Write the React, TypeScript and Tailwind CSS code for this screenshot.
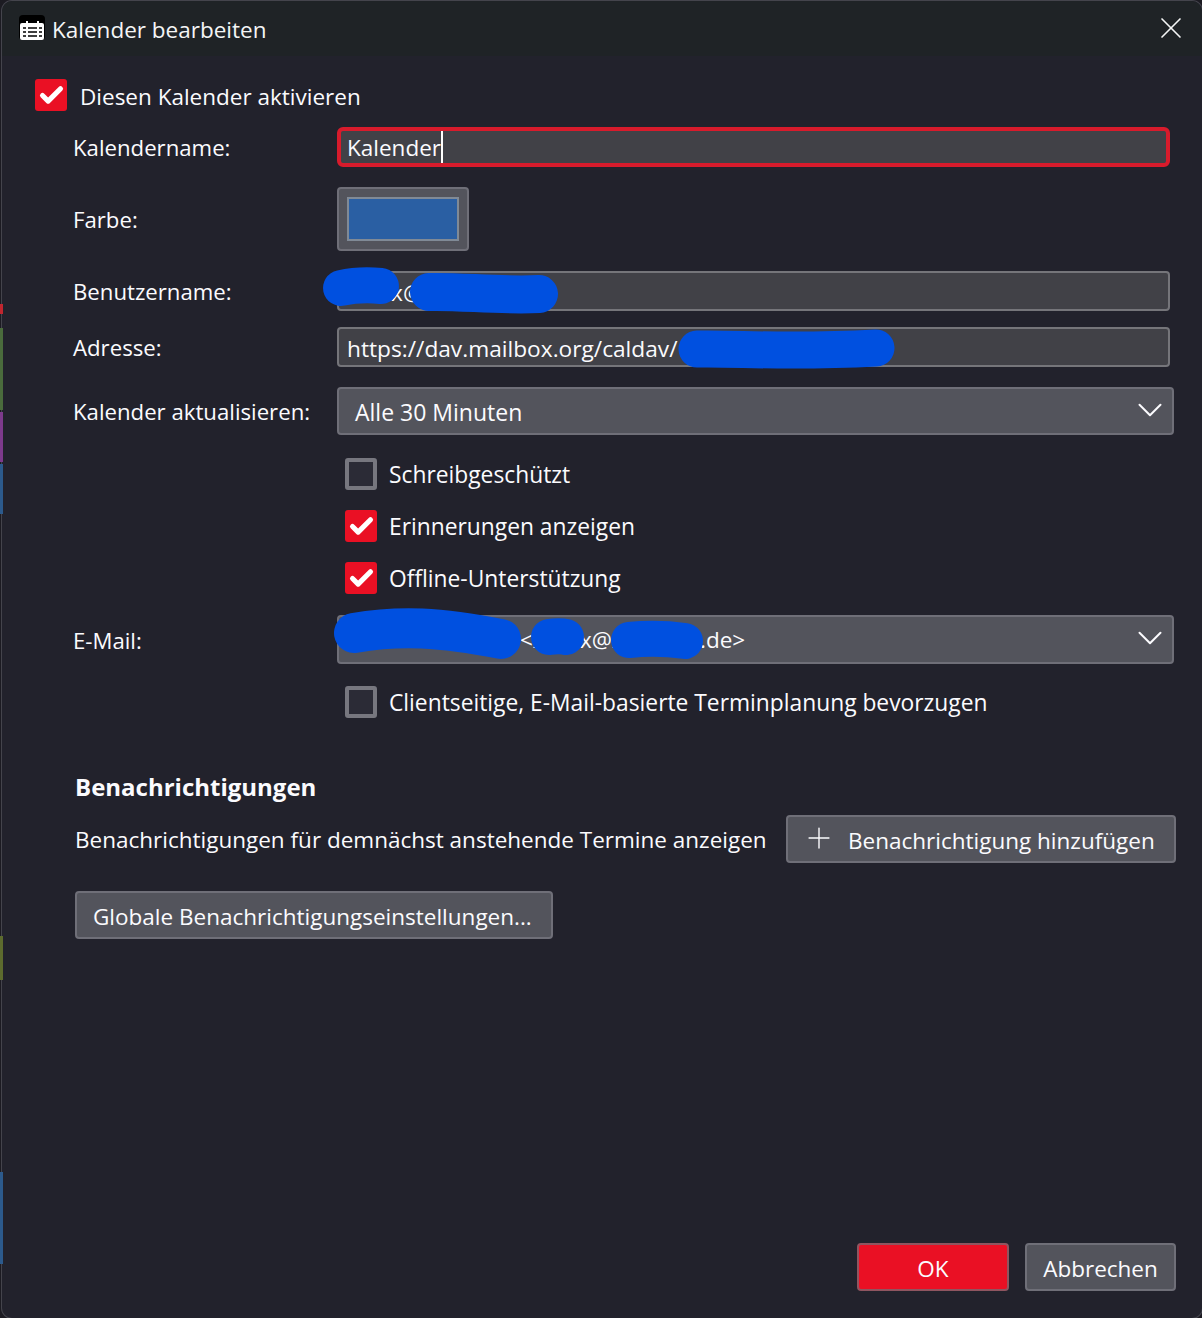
import { X, ChevronDown, Plus, Check } from "lucide-react";
import type { ReactNode } from "react";

function Checkbox({ checked, label, big }: { checked?: boolean; label: string; big?: boolean }) {
  return (
    <div className="flex h-8 items-center">
      <div
        className={
          checked
            ? "flex h-8 w-8 items-center justify-center rounded-[3px] bg-[#ea1024]"
            : "h-8 w-8 rounded-[3px] border-4 border-[#77777f] bg-[#2b2b36]"
        }
      >
        {checked && <Check size={27} strokeWidth={4.5} className="text-white" />}
      </div>
      <span className={big ? "ml-[13px] pt-1 text-[#fbfbfe]" : "ml-3 pt-[2px] text-[22.8px] text-[#fbfbfe]"}>{label}</span>
    </div>
  );
}

function Row({ label, children, className }: { label: string; children: ReactNode; className?: string }) {
  return (
    <div className={`flex items-center ${className ?? ""}`}>
      <span className="w-[335px] shrink-0 pt-[2px] pl-[71px] text-[22.2px] text-[#fbfbfe]">{label}</span>
      {children}
    </div>
  );
}

const textInput = "flex h-10 w-[833px] items-center rounded-[4px] border-2 border-[#75757a] bg-[#414147] px-2 pt-1 text-[22.7px] text-[#fbfbfe]";
const selectBox = "flex w-[837px] items-center justify-between rounded-[4px] border-2 border-[#6f6f78] bg-[#53545c] text-[23px] text-[#fbfbfe]";
const button = "flex h-12 items-center rounded-[4px] border-2 border-[#6f6f78] bg-[#53545c] pt-[3px] text-[#fbfbfe]";

// painted-over parts of the screenshot
function Scribble({ d, width }: { d: string; width: number }) {
  return (
    <svg className="pointer-events-none absolute top-0 left-0" width="1202" height="1318" fill="none">
      <path d={d} stroke="#0050e0" strokeWidth={width} strokeLinecap="round" strokeLinejoin="round" />
    </svg>
  );
}

export default function App() {
  return (
    <div
      className="relative h-[1318px] w-[1202px] overflow-hidden bg-[#1c1b22] pt-px pl-[2px] text-[22.5px] leading-8 whitespace-nowrap"
      style={{ fontFamily: '"Open Sans", "Noto Sans", sans-serif' }}
    >
      <div className="absolute top-[304px] left-0 h-[10px] w-[3px] bg-[#c0262f]" />
      <div className="absolute top-[328px] left-0 h-[82px] w-[3px] bg-[#4a6b3c]" />
      <div className="absolute top-[412px] left-0 h-[50px] w-[3px] bg-[#7d3a8c]" />
      <div className="absolute top-[464px] left-0 h-[50px] w-[3px] bg-[#2c5a8c]" />
      <div className="absolute top-[936px] left-0 h-[44px] w-[3px] bg-[#5d6b2e]" />
      <div className="absolute top-[1172px] left-0 h-[92px] w-[3px] bg-[#2c5a8c]" />

      <div className="h-full w-[1200px] overflow-hidden rounded-[10px] bg-[#22222c] shadow-[0_0_0_1px_#44444c]">
        <div className="flex h-[55px] items-center justify-between bg-[#1f2326] pr-[13px] pl-[17px]">
          <div className="flex items-center">
            <svg width="26" height="26" viewBox="0 0 26 26" className="-mt-[2px]">
              <rect width="26" height="25" rx="4" fill="#000" />
              <rect x="1" y="8" width="24" height="17" rx="2" fill="#fff" />
              <rect x="7" y="6" width="2" height="3" fill="#fff" />
              <rect x="18" y="6" width="2" height="3" fill="#fff" />
              <path d="M4 13h3M9 13h9M20 13h3M4 17h3M9 17h9M20 17h3M4 21h3M9 21h9M20 21h3" stroke="#000" strokeWidth="1.4" />
            </svg>
            <span className="ml-[7px] pt-[2px] text-[#f4f5f5]">Kalender bearbeiten</span>
          </div>
          <X size={36} strokeWidth={1.1} className="-mt-px text-[#f4f5f5]" />
        </div>

        <div className="mt-[23px] ml-[33px]">
          <Checkbox checked big label="Diesen Kalender aktivieren" />
        </div>

        <Row label="Kalendername:" className="mt-4">
          <div className="flex h-10 w-[833px] items-center rounded-[6px] border-4 border-[#d81b2c] bg-[#414147] px-[6px] text-[#fbfbfe]">
            <span className="pt-[2px]">Kalender</span>
            <span className="h-8 w-[2px] bg-white" />
          </div>
        </Row>

        <Row label="Farbe:" className="mt-5">
          <div className="h-16 w-[132px] rounded-[4px] border-2 border-[#6f6f78] bg-[#53545c] p-2">
            <div className="h-full w-full border-2 border-[#808a96] bg-[#2a5fa3]" />
          </div>
        </Row>

        <Row label="Benutzername:" className="mt-5">
          <div className={textInput}>
            <span className="pl-[44px]">x@</span>
          </div>
        </Row>

        <Row label="Adresse:" className="mt-4">
          <div className={textInput}>https://dav.mailbox.org/caldav/</div>
        </Row>

        <Row label="Kalender aktualisieren:" className="mt-5">
          <div className={`${selectBox} h-12 pr-px pl-4`}>
            <span className="pt-[2px]">Alle 30 Minuten</span>
            <ChevronDown size={42} strokeWidth={1.15} className="-mt-[2px]" />
          </div>
        </Row>

        <div className="mt-[23px] flex flex-col gap-5 pl-[343px]">
          <Checkbox label="Schreibgeschützt" />
          <Checkbox checked label="Erinnerungen anzeigen" />
          <Checkbox checked label="Offline-Unterstützung" />
        </div>

        <Row label="E-Mail:" className="mt-[21px]">
          <div className={`${selectBox} h-[49px] pr-px pl-[181px]`}>
            <span className="text-[22.5px]">&lt;xxxxx@xxxxxxxi.de&gt;</span>
            <ChevronDown size={42} strokeWidth={1.15} className="-mt-[3px]" />
          </div>
        </Row>

        <div className="mt-[22px] pl-[343px]">
          <Checkbox label="Clientseitige, E-Mail-basierte Terminplanung bevorzugen" />
        </div>

        <div className="ml-[73px]">
          <h2 className="mt-[53px] text-[24px] font-bold text-[#fbfbfe]">Benachrichtigungen</h2>
          <div className="mt-[12px] flex items-center">
            <span className="w-[711px] shrink-0 pt-[2px] text-[#fbfbfe]">Benachrichtigungen für demnächst anstehende Termine anzeigen</span>
            <div className={`${button} w-[390px] pl-[14px]`}>
              <Plus size={34} strokeWidth={1} className="-mt-[5px]" />
              <span className="ml-3">Benachrichtigung hinzufügen</span>
            </div>
          </div>
          <div className={`${button} mt-7 w-[478px] pl-4`}>Globale Benachrichtigungseinstellungen...</div>
        </div>

        <div className="mt-[304px] flex justify-end gap-4 pr-[26px]">
          <div className="flex h-12 w-[152px] items-center justify-center rounded-[4px] border-2 border-[#8f5560] bg-[#ea1024] pt-[3px] text-[#fbfbfe]">OK</div>
          <div className={`${button} w-[151px] justify-center`}>Abbrechen</div>
        </div>
      </div>

      <Scribble width={36} d="M341 288C355 285 370 285 381 286" />
      <Scribble width={38} d="M429 292C460 291 500 296 539 294" />
      <Scribble width={37} d="M697 349C740 348 780 353 876 348" />
      <Scribble width={40} d="M354 633C400 625 440 627 501 639" />
      <Scribble width={36} d="M549 637C555 636 562 636 566 637" />
      <Scribble width={36} d="M629 640C650 638 670 639 685 641" />
    </div>
  );
}
